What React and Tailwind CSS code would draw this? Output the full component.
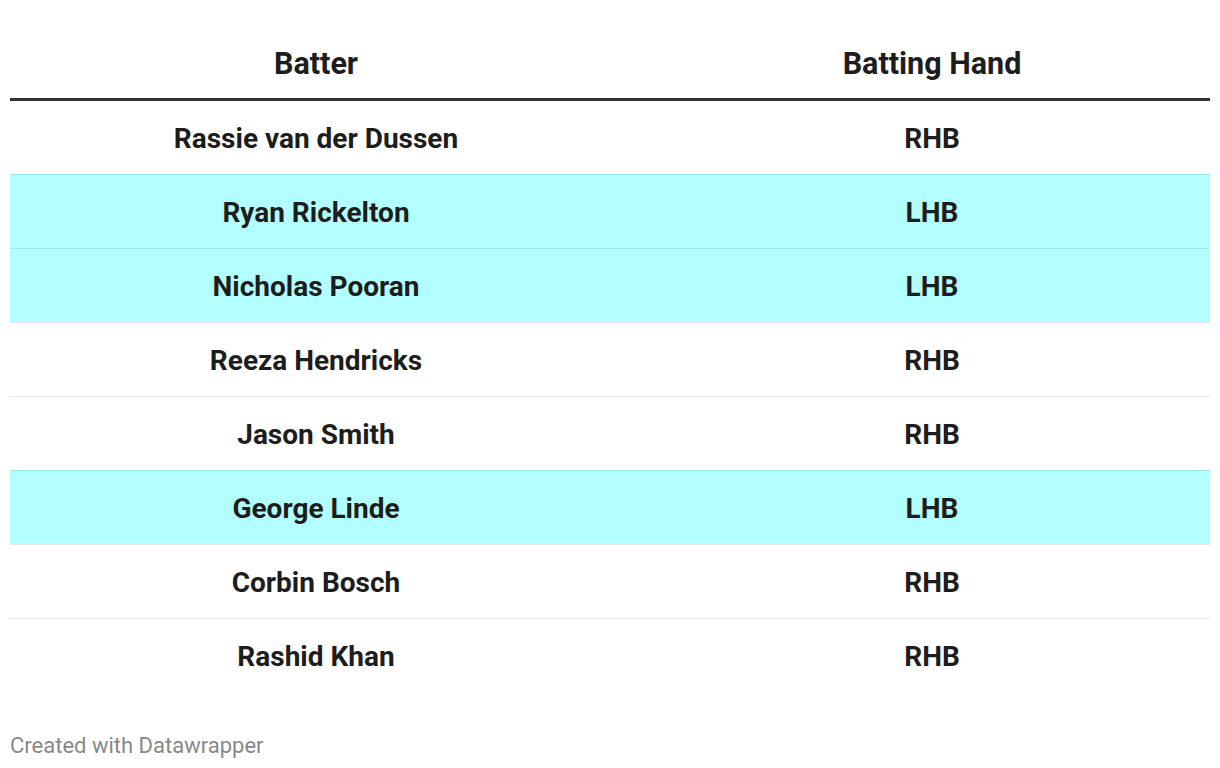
const rows = [
  { name: "Rassie van der Dussen", hand: "RHB" },
  { name: "Ryan Rickelton", hand: "LHB" },
  { name: "Nicholas Pooran", hand: "LHB" },
  { name: "Reeza Hendricks", hand: "RHB" },
  { name: "Jason Smith", hand: "RHB" },
  { name: "George Linde", hand: "LHB" },
  { name: "Corbin Bosch", hand: "RHB" },
  { name: "Rashid Khan", hand: "RHB" },
];

export default function App() {
  return (
    <div
      className="w-[1220px] h-[768px] bg-white px-[10px] text-[#1d1d1d]"
      style={{ fontFamily: "Roboto, 'Liberation Sans', sans-serif" }}
    >
      {/* header */}
      <div className="flex h-[101px] pt-[30px] border-b-[3px] border-[#333333] text-[30.5px] font-bold">
        <div className="w-[612px] flex items-center justify-center">Batter</div>
        <div className="flex-1 pl-[32px] flex items-center justify-center">Batting Hand</div>
      </div>

      {rows.map((row, idx) => {
        const lefty = row.hand === "LHB";
        const border = idx === 0 ? "" : lefty ? "border-t border-[#9aecec]" : "border-t border-[#e6e6e6]";
        return (
          <div
            key={idx}
            className={`flex pt-[2px] text-[28px] font-bold ${idx === 0 ? "h-[73px]" : "h-[74px]"} ${border} ${lefty ? "bg-[#b3ffff]" : "bg-white"}`}
          >
            <div className="w-[612px] flex items-center justify-center">{row.name}</div>
            <div className="flex-1 pl-[32px] flex items-center justify-center">{row.hand}</div>
          </div>
        );
      })}

      <div className="pt-[37px] text-[22px] text-[#888888]">Created with Datawrapper</div>
    </div>
  );
}
